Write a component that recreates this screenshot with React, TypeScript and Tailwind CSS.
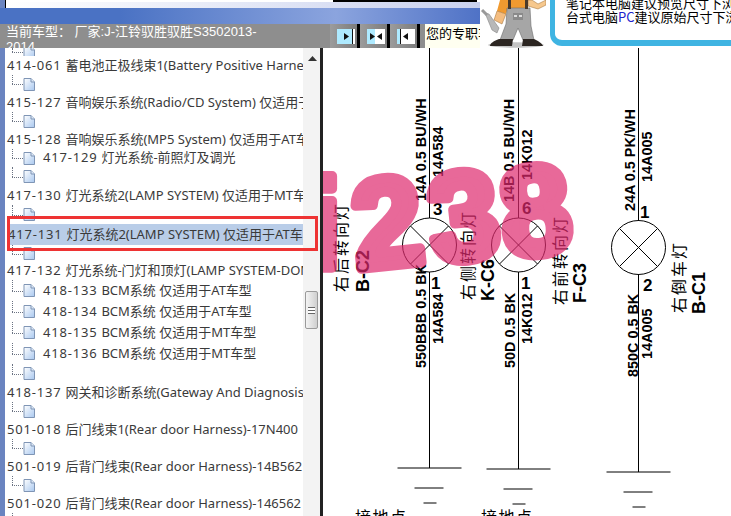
const uiFont = "font-['Noto_Sans','Noto_Sans_CJK_SC',sans-serif]";
const cjkFont = "font-['Noto_Sans_CJK_SC',sans-serif]";
const labelCls = "font-['Liberation_Sans',sans-serif] font-bold";

type Row = { code?: string; label?: string; indent?: boolean; h: number; selected?: boolean };

const rows: Row[] = [
  { h: 8 },
  { code: "414-061", label: "蓄电池正极线束1(Battery Positive Harness)-14A068", h: 19 },
  { h: 18 },
  { code: "415-127", label: "音响娱乐系统(Radio/CD System) 仅适用于AT车型", h: 19 },
  { h: 18 },
  { code: "415-128", label: "音响娱乐系统(MP5 System) 仅适用于AT车型", h: 19 },
  { code: "417-129", label: "灯光系统-前照灯及调光", indent: true, h: 18 },
  { h: 19 },
  { code: "417-130", label: "灯光系统2(LAMP SYSTEM) 仅适用于MT车型", h: 19 },
  { h: 19 },
  { code: "417-131", label: "灯光系统2(LAMP SYSTEM) 仅适用于AT车型", h: 21, selected: true },
  { h: 17 },
  { code: "417-132", label: "灯光系统-门灯和顶灯(LAMP SYSTEM-DOME)", h: 18 },
  { code: "418-133", label: "BCM系统 仅适用于AT车型", indent: true, h: 21 },
  { code: "418-134", label: "BCM系统 仅适用于AT车型", indent: true, h: 21 },
  { code: "418-135", label: "BCM系统 仅适用于MT车型", indent: true, h: 21 },
  { code: "418-136", label: "BCM系统 仅适用于MT车型", indent: true, h: 21 },
  { h: 19 },
  { code: "418-137", label: "网关和诊断系统(Gateway And Diagnosis)", h: 19 },
  { h: 18 },
  { code: "501-018", label: "后门线束1(Rear door Harness)-17N400", h: 19 },
  { h: 18 },
  { code: "501-019", label: "后背门线束(Rear door Harness)-14B562", h: 19 },
  { h: 18 },
  { code: "501-020", label: "后背门线束(Rear door Harness)-146562", h: 19 },
  { h: 18 },
];

function DocIcon() {
  return (
    <svg width="12" height="13" viewBox="0 0 12 13" className="shrink-0">
      <defs>
        <linearGradient id="doc" x1="0" y1="0" x2="1" y2="1">
          <stop offset="0" stopColor="#ffffff" />
          <stop offset="1" stopColor="#a9c8ef" />
        </linearGradient>
      </defs>
      <path d="M1 .5H8L11.5 4V12.5H1Z" fill="url(#doc)" stroke="#7f95b5" />
      <path d="M8 .5V4H11.5" fill="#dfe9f7" stroke="#7f95b5" />
    </svg>
  );
}

function Connector() {
  return (
    <div className="relative w-[11px] shrink-0 self-stretch">
      <div className="absolute left-0 top-0 bottom-1/2 border-l border-dotted border-gray-500" />
      <div className="absolute left-0 right-0 top-1/2 border-t border-dotted border-gray-500" />
    </div>
  );
}

function Code({ children }: { children: string }) {
  return <span className="mr-[4px] tracking-[0.8px]">{children}</span>;
}

function TreeRow({ row }: { row: Row }) {
  if (!row.code) {
    return (
      <div className="flex items-center overflow-hidden pl-[7px]" style={{ height: row.h }}>
        <Connector />
        <DocIcon />
      </div>
    );
  }
  if (row.indent) {
    return (
      <div className="flex items-center pl-[7px]" style={{ height: row.h }}>
        <Connector />
        <DocIcon />
        <span className="ml-[8px] whitespace-nowrap">
          <Code>{row.code}</Code>
          {row.label}
        </span>
      </div>
    );
  }
  if (row.selected) {
    return (
      <div className="ml-[4px] flex items-center overflow-hidden whitespace-nowrap bg-[#b9cde8]" style={{ height: row.h }}>
        <span className="-ml-[1px]">
          <Code>{row.code}</Code>
          {row.label}
        </span>
      </div>
    );
  }
  return (
    <div className="flex items-center overflow-hidden whitespace-nowrap pl-[2px]" style={{ height: row.h }}>
      <span>
        <Code>{row.code}</Code>
        {row.label}
      </span>
    </div>
  );
}

function Sidebar() {
  return (
    <aside className="relative flex h-[468px] w-[323px] shrink-0 overflow-hidden border-l-[5px] border-[#6a84c0] bg-white">
      <div className={`${uiFont} w-[298px] shrink-0 overflow-hidden text-[13px] text-[#3a3a3a]`}>
        {rows.map((row, i) => (
          <TreeRow key={i} row={row} />
        ))}
      </div>
      <div className="relative w-[17px] shrink-0 bg-[#f3f3f3]">
        <svg width="9" height="5" viewBox="0 0 9 5" className="absolute left-[5px] top-[8px]">
          <path d="M4.5 0 9 5H0Z" fill="#333" />
        </svg>
        <div className="absolute left-[2px] top-[243px] flex h-[38px] w-[13px] items-center justify-center rounded-[2px] border border-[#9a9a9a] bg-gradient-to-r from-[#f4f4f4] to-[#cfcfcf]">
          <div className="h-[7px] w-[7px] border-y border-[#666] bg-[linear-gradient(#fff_0_33%,#666_33%_66%,#fff_66%)]" />
        </div>
      </div>
      <div className="w-[3px] shrink-0 bg-[#222]" />
      {/* red annotation around the selected row */}
      <div className="absolute left-[2px] top-[168px] h-[35px] w-[311px] border-[3px] border-[#ee3333]" />
    </aside>
  );
}

function NavButton({ kind }: { kind: "right" | "both" | "left" }) {
  const fill =
    kind === "right"
      ? "bg-[linear-gradient(90deg,#aeeaff_0_85%,#111_85%_90%,#fff_90%)]"
      : kind === "both"
        ? "bg-[linear-gradient(90deg,#aeeaff_0_45%,#fff_45%)]"
        : "bg-[linear-gradient(90deg,#aeeaff_0_15%,#111_15%_20%,#fff_20%)]";
  return (
    <div className="flex h-[24px] w-[30px] items-center border-r-[3px] border-black bg-gradient-to-r from-[#9c9c9c] to-[#7c7c7c] pl-[7px]">
      <div className={`flex h-[15px] w-[18px] items-center justify-center ${fill}`}>
        <svg width="14" height="9" viewBox="0 0 14 9">
          {kind !== "left" && <path d={kind === "both" ? "M1 1V8L6 4.5Z" : "M5 1V8L10 4.5Z"} fill="#111" />}
          {kind !== "right" && <path d={kind === "both" ? "M13 1V8L8 4.5Z" : "M9 1V8L4 4.5Z"} fill="#111" />}
        </svg>
      </div>
    </div>
  );
}

function Mascot() {
  return (
    <svg width="66" height="48" viewBox="0 0 66 48" className="shrink-0">
      <rect width="66" height="48" fill="#fff" />
      <ellipse cx="36" cy="45" rx="28" ry="2.8" fill="#c4c4c4" />
      {/* shirt and arms */}
      <path d="M20 0H48V8H28L26 14 17 11Z" fill="#f09a30" />
      <path d="M17 11 26 14 22 24 14 20Z" fill="#f4bd80" stroke="#9a6a30" strokeWidth=".5" />
      <path d="M48 0H52L58 4 66 0V5L58 9 48 6Z" fill="#f6c88e" stroke="#9a6a30" strokeWidth=".5" />
      {/* wrench */}
      <path d="M5 13 9 14 19 28 17 33 12 30Z" fill="#b8b8b8" stroke="#777" strokeWidth=".5" />
      <path d="M2 10 7 15" stroke="#999" strokeWidth="3" />
      {/* overalls */}
      <path d="M27 8H50L51 26 54 40H43L38 28 33 40H20L26 24Z" fill="#a6a6a6" stroke="#6c6c6c" strokeWidth=".6" />
      <rect x="33" y="13" width="10" height="7" fill="#8a8a8a" />
      <rect x="34" y="15" width="3" height="2" fill="#ddd" />
      <rect x="39" y="15" width="3" height="2" fill="#ddd" />
      <rect x="28" y="0" width="3" height="9" fill="#4a3a2a" />
      <rect x="45" y="0" width="3" height="9" fill="#4a3a2a" />
      {/* boots */}
      <path d="M19 39H33L32 46H10C10 43 14 41 19 39Z" fill="#2c2622" />
      <path d="M43 39H54C58 41 62 43 63 46H42Z" fill="#2c2622" />
    </svg>
  );
}

function Header() {
  return (
    <header className="relative z-10 flex h-[48px] shrink-0">
      <div className="flex w-[480px] shrink-0 flex-col">
        <div className="flex h-[8px] border-l-[5px] border-[#6a84c0]">
          <div className="flex flex-1 flex-col border-l border-black">
            <div className="flex h-[2px]">
              <div className="w-[327px] shrink-0 bg-white" />
              <div className="w-[144px] shrink-0 bg-black" />
            </div>
            <div className="flex-1 bg-gradient-to-r from-white to-[#c9d1ee]" />
          </div>
        </div>
        <div className="h-[16px] bg-[linear-gradient(90deg,#4a72c4_0%,#4a72c4_25%,#8ba4de_70%,#4f72c6_100%)]" />
        <div className="flex h-[24px]">
          <div className="h-[24px] w-[330px] shrink-0 overflow-hidden bg-[#8e8e8e] pl-[6px]">
            <p className="w-[258px] font-['Liberation_Sans','Noto_Sans_CJK_SC',sans-serif] text-[13px] leading-[15px] text-white">
              当前车型： 厂家:J-江铃驭胜驭胜S3502013-
              <br />
              2014
            </p>
          </div>
          <div className="flex w-[95px] shrink-0 bg-[#8e8e8e]">
            <NavButton kind="right" />
            <NavButton kind="both" />
            <NavButton kind="left" />
          </div>
          <div className={`${cjkFont} flex-1 overflow-hidden whitespace-nowrap bg-[#fffff0] pt-[1px] pl-[1px] text-[13px] leading-[16px] text-black`}>
            您的专职车型
          </div>
        </div>
      </div>
      <Mascot />
      <div className="ml-[4px] h-[46px] flex-1 overflow-hidden rounded-bl-[12px] border-b-[6px] border-l-[5px] border-[#3fb4e2] bg-white pl-[11px]">
        <p className={`${cjkFont} mt-[-4px] whitespace-nowrap text-[13px] leading-[14px] text-black`}>笔记本电脑建议预览尺寸下浏览</p>
        <p className={`${cjkFont} whitespace-nowrap text-[13px] leading-[14px] text-black`}>
          台式电脑<span className="text-[#2222cc]">PC</span>建议原始尺寸下浏览
        </p>
      </div>
    </header>
  );
}

function Wire({ x, y, children }: { x: number; y: number; children: string }) {
  return (
    <text transform={`translate(${x} ${y}) rotate(-90)`} fontSize="14.4" className={labelCls} fill="#000">
      {children}
    </text>
  );
}

function Name({ x, y, children }: { x: number; y: number; children: string }) {
  return (
    <text transform={`translate(${x} ${y}) rotate(-90)`} fontSize="16" letterSpacing="2" className={cjkFont} fill="#000">
      {children}
    </text>
  );
}

function Plug({ x, y, children }: { x: number; y: number; children: string }) {
  return (
    <text transform={`translate(${x} ${y}) rotate(-90)`} fontSize="18" className={labelCls} fill="#000">
      {children}
    </text>
  );
}

function Lamp({ cx, cy }: { cx: number; cy: number }) {
  const d = 19;
  return (
    <g fill="none" stroke="#000" strokeWidth="1">
      <circle cx={cx} cy={cy} r="27" />
      <path d={`M${cx - d} ${cy - d}L${cx + d} ${cy + d}M${cx - d} ${cy + d}L${cx + d} ${cy - d}`} />
    </g>
  );
}

function Ground({ x, y, w }: { x: number; y: number; w: number }) {
  return (
    <g stroke="#000" strokeWidth="1">
      <path d={`M${x - w} ${y}H${x + w}`} />
      <path d={`M${x - 15} ${y + 20}H${x + 14}`} />
      <path d={`M${x - 6} ${y + 35}H${x + 7}`} />
    </g>
  );
}

function Diagram() {
  return (
    <svg width="408" height="468" viewBox="323 48 408 468" className="block">
      <g stroke="#000" strokeWidth="1" fill="none">
        <path d="M429.5 48V218M429.5 272V468" />
        <path d="M518.5 48V218M518.5 272V469" />
        <path d="M638.5 48V221M638.5 274V472" />
      </g>
      <Lamp cx={429.5} cy={245} />
      <Lamp cx={518.5} cy={245} />
      <Lamp cx={638.5} cy={247.5} />

      <Ground x={429.5} y={468} w={32} />
      <Ground x={518.5} y={469} w={32} />
      <Ground x={638.5} y={472} w={32} />

      <Wire x={426} y={201}>14A 0.5 BU/WH</Wire>
      <Wire x={443} y={177}>14A584</Wire>
      <Wire x={426} y={368}>550BBB 0.5 BK</Wire>
      <Wire x={443} y={344}>14A584</Wire>
      <Wire x={514} y={202}>14B 0.5 BU/WH</Wire>
      <Wire x={532} y={180}>14K012</Wire>
      <Wire x={515} y={368}>50D 0.5 BK</Wire>
      <Wire x={532} y={344}>14K012</Wire>
      <Wire x={635} y={211}>24A 0.5 PK/WH</Wire>
      <Wire x={652} y={182}>14A005</Wire>
      <Wire x={638} y={377}>850C 0.5 BK</Wire>
      <Wire x={652} y={359}>14A005</Wire>

      <g fontSize="17" className={labelCls} fill="#000">
        <text x="433" y="215">3</text>
        <text x="431" y="289">1</text>
        <text x="522" y="214">6</text>
        <text x="521" y="289">1</text>
        <text x="640" y="218">1</text>
        <text x="643" y="291">2</text>
      </g>

      <Name x={347} y={292}>右后转向灯</Name>
      <Name x={474} y={300}>右侧转向灯</Name>
      <Name x={566} y={305}>右前转向灯</Name>
      <Name x={685} y={313}>右倒车灯</Name>
      <Plug x={369} y={292}>B-C2</Plug>
      <Plug x={494} y={301}>K-C6</Plug>
      <Plug x={586} y={303}>F-C3</Plug>
      <Plug x={705} y={314}>B-C1</Plug>

      <g fontSize="16" letterSpacing="1.5" className={cjkFont} fill="#000">
        <text x="355" y="523">接地点</text>
        <text x="481" y="523">接地点</text>
        <text x="607" y="530">接地点</text>
      </g>

      {/* pink watermark, each character translucent so overlaps read darker */}
      <g fill="#df2a6e" stroke="#df2a6e" strokeWidth="10" strokeLinejoin="round" fontSize="126" className={labelCls}>
        <text x="306" y="268" opacity="0.7">i</text>
        <text x="352" y="266" opacity="0.7" transform="rotate(-6 385 220)">2</text>
        <text x="428" y="260" opacity="0.7" transform="rotate(-6 460 210)">3</text>
        <text x="500" y="254" opacity="0.7" transform="rotate(-6 535 205)">8</text>
      </g>
    </svg>
  );
}

export default function App() {
  return (
    <div className="flex h-[516px] w-[731px] flex-col overflow-hidden bg-white">
      <Header />
      <div className="flex min-h-0 flex-1">
        <Sidebar />
        <Diagram />
      </div>
    </div>
  );
}
